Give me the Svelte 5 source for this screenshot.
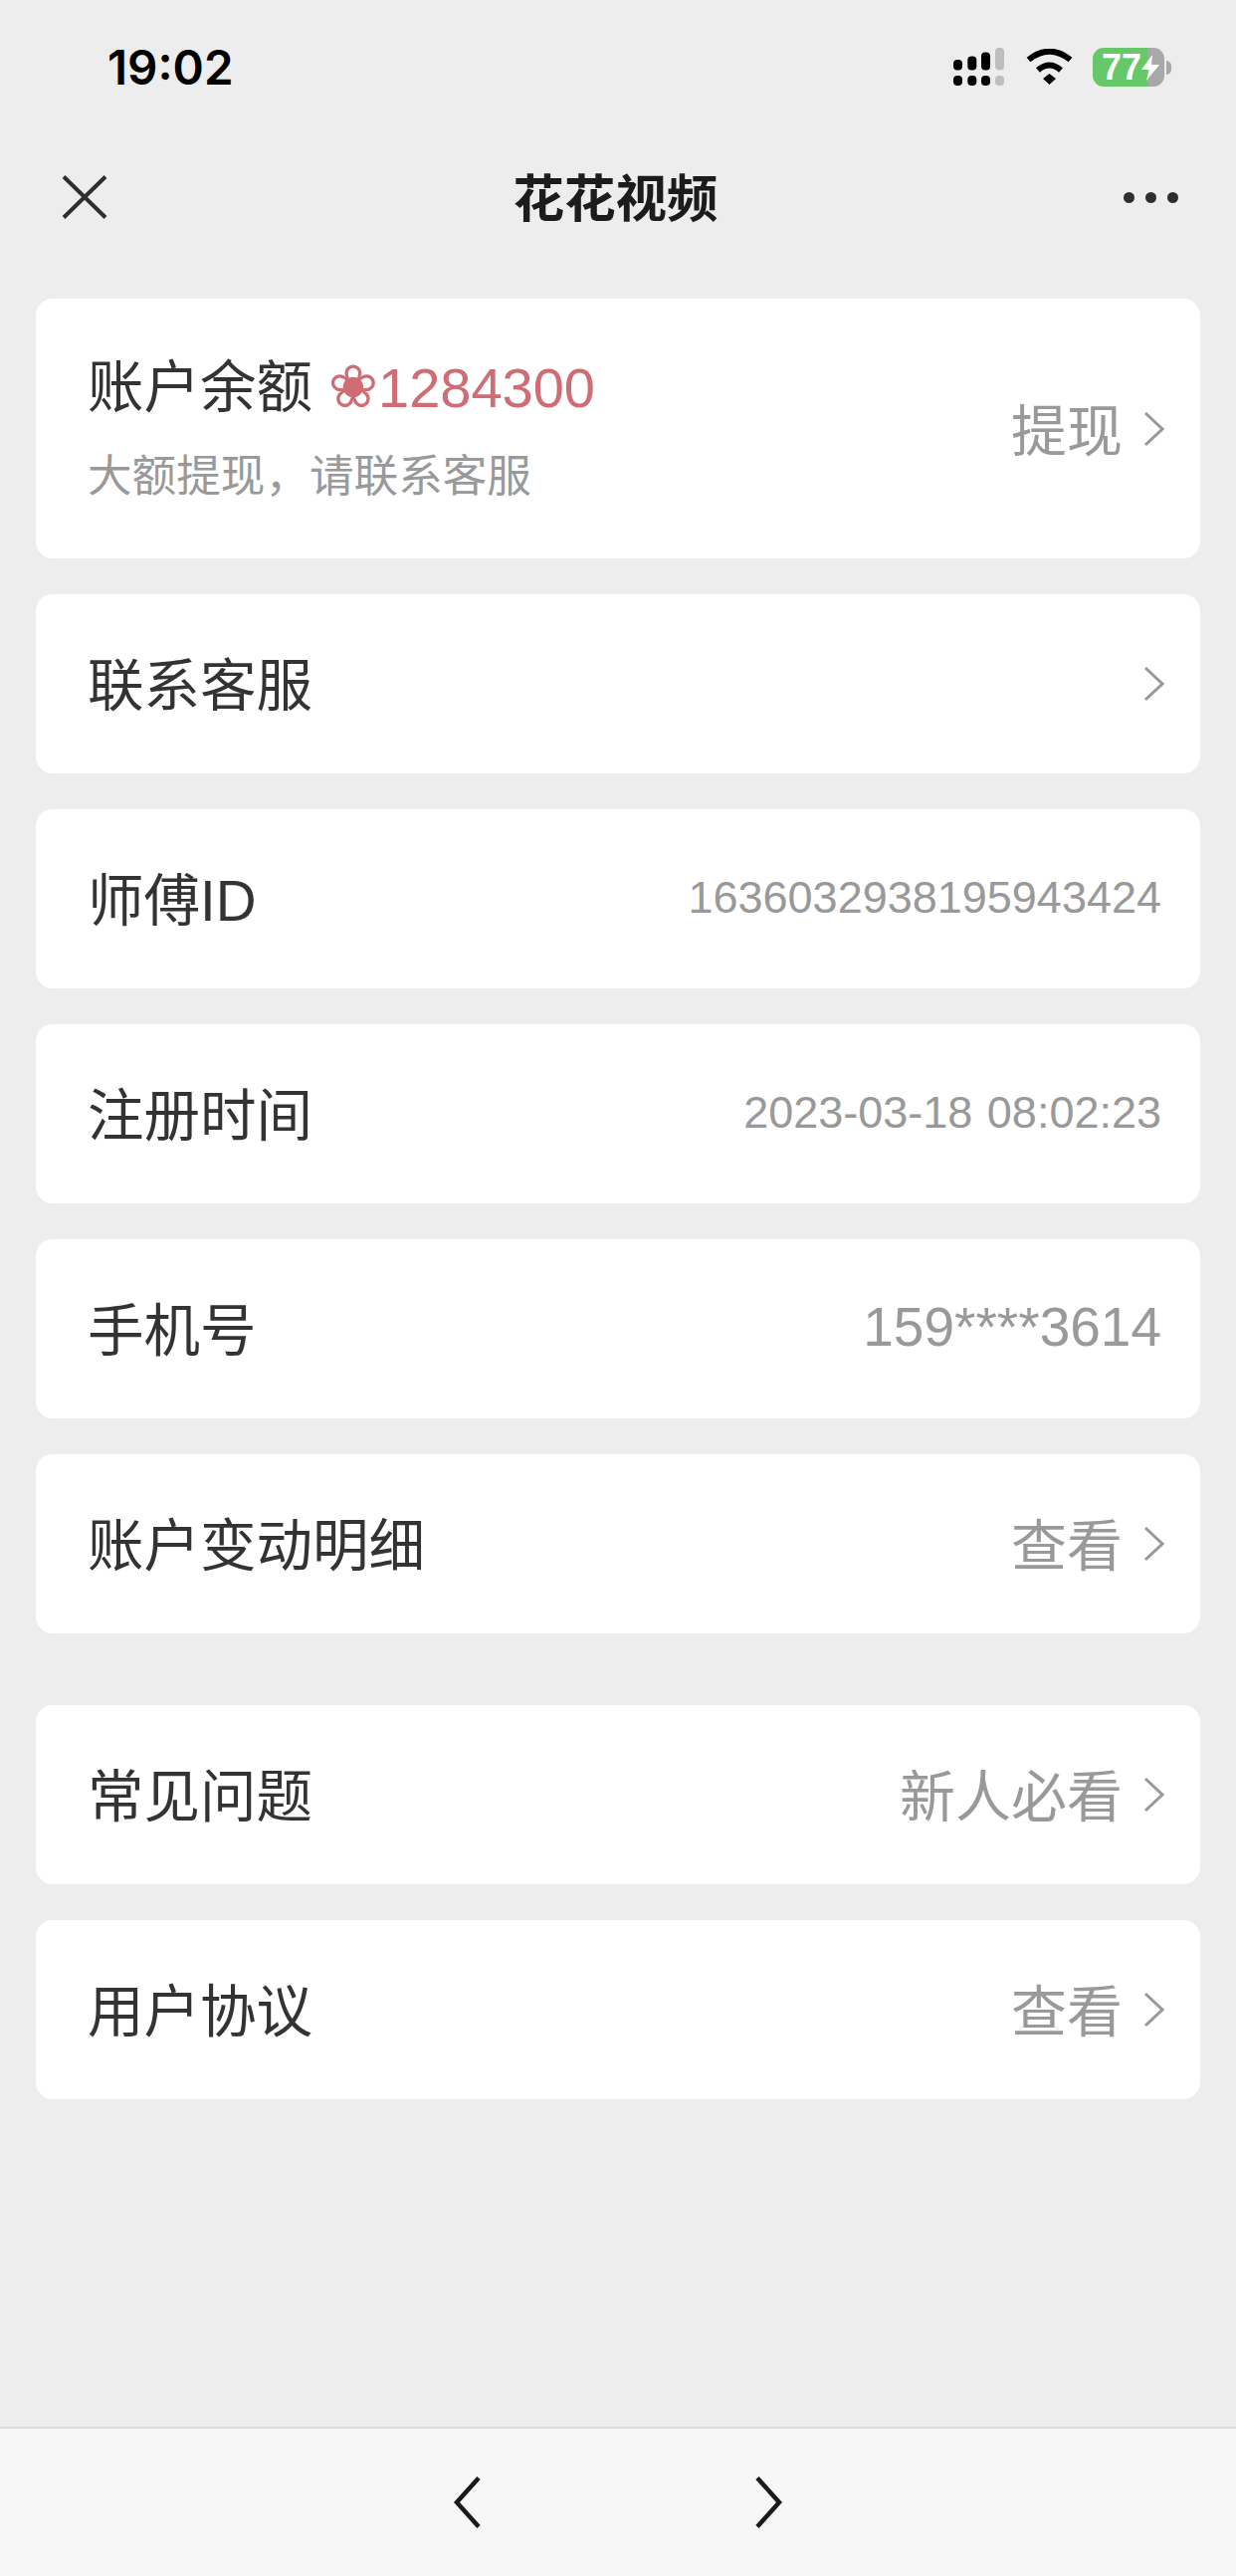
<script lang="ts">
  type Row = {
    label: string
    value?: string
    size?: 'small' | 'phone' | 'large'
    arrow?: boolean
    group?: boolean
  }

  const rows: Row[] = [
    { label: '联系客服', arrow: true },
    { label: '师傅ID', value: '1636032938195943424', size: 'small' },
    { label: '注册时间', value: '2023-03-18 08:02:23', size: 'small' },
    { label: '手机号', value: '159****3614', size: 'phone' },
    { label: '账户变动明细', value: '查看', size: 'large', arrow: true },
    { label: '常见问题', value: '新人必看', size: 'large', arrow: true, group: true },
    { label: '用户协议', value: '查看', size: 'large', arrow: true }
  ]

  const bars = [
    { x: 0, y: 12, h: 10.5 },
    { x: 14.3, y: 8.5, h: 14 },
    { x: 28, y: 4.5, h: 18 }
  ]
  const dots = [0, 14.3, 28]
</script>

<div class="page">
  <div class="status">
    <span class="time">19:02</span>
    <div class="status-icons">
      <svg class="signal" width="51" height="38" viewBox="0 0 51 38">
        {#each bars as b}
          <rect x={b.x} y={b.y} width="9" height={b.h} rx="4" fill="#000" />
        {/each}
        <rect x="42" y="0" width="9" height="22.5" rx="4" fill="#bdbdbd" />
        {#each dots as x}
          <rect {x} y="28" width="9" height="10" rx="4" fill="#000" />
        {/each}
        <rect x="42" y="28" width="9" height="10" rx="4" fill="#bdbdbd" />
      </svg>
      <svg class="wifi" width="47" height="36" viewBox="0 0 47 36">
        <path d="M2.5 11 Q23.5 -5.5 44.5 11" fill="none" stroke="#000" stroke-width="6" />
        <path d="M12 21.5 Q23.5 11.5 35 21.5" fill="none" stroke="#000" stroke-width="6" />
        <polygon points="17,30 23.5,25 30,30 23.5,36" fill="#000" />
      </svg>
      <div class="battery">
        <div class="battery-body">
          <span class="battery-level">77</span>
          <svg class="bolt" width="18" height="26" viewBox="0 0 18 26">
            <polygon points="11,0 0,15 7.5,15 5,26 18,10 10,10" fill="#fff" />
          </svg>
        </div>
        <span class="battery-nub"></span>
      </div>
    </div>
  </div>

  <header class="nav">
    <svg class="close" width="46" height="44" viewBox="0 0 46 44">
      <path d="M2 1.5 L44 42.5 M44 1.5 L2 42.5" stroke="#2e2e2e" stroke-width="4" fill="none" />
    </svg>
    <h1>花花视频</h1>
    <div class="more"><i></i><i></i><i></i></div>
  </header>

  <main class="list">
    <section class="card balance">
      <div class="balance-text">
        <div class="balance-line">账户余额 <span class="amount"><span class="flower">❀</span>1284300</span></div>
        <div class="hint">大额提现，请联系客服</div>
      </div>
      <div class="right">
        <span class="value large">提现</span>
        <svg class="chevron" width="21" height="36" viewBox="0 0 21 36">
          <path d="M2 2 L19 18 L2 34" fill="none" stroke="#999" stroke-width="3" />
        </svg>
      </div>
    </section>

    {#each rows as row}
      <section class="card row" class:group={row.group}>
        <span class="label">{row.label}</span>
        <div class="right">
          {#if row.value}
            <span class="value {row.size}">{row.value}</span>
          {/if}
          {#if row.arrow}
            <svg class="chevron" width="21" height="36" viewBox="0 0 21 36">
              <path d="M2 2 L19 18 L2 34" fill="none" stroke="#999" stroke-width="3" />
            </svg>
          {/if}
        </div>
      </section>
    {/each}
  </main>

  <footer class="toolbar">
    <svg width="30" height="52" viewBox="0 0 30 52">
      <path d="M27 1.5 L5 26 L27 50.5" fill="none" stroke="#1a1a1a" stroke-width="4.5" />
    </svg>
    <svg width="30" height="52" viewBox="0 0 30 52">
      <path d="M3 1.5 L25 26 L3 50.5" fill="none" stroke="#1a1a1a" stroke-width="4.5" />
    </svg>
  </footer>
</div>

<style>
  :global(body) {
    margin: 0;
    background: #ededed;
  }

  .page {
    display: flex;
    flex-direction: column;
    height: 2588px;
    background: #ededed;
    font-family: 'Liberation Sans', 'Noto Sans CJK SC', sans-serif;
    color: #333;
    overflow: hidden;
  }

  .status {
    display: flex;
    justify-content: space-between;
    align-items: flex-start;
    height: 132px;
    padding: 48px 65px 0 108px;
    box-sizing: border-box;
  }

  .time {
    font-family: Inter, 'Liberation Sans', sans-serif;
    font-size: 47.5px;
    font-weight: 600;
    line-height: 40px;
    color: #000;
  }

  .status-icons {
    display: flex;
    align-items: flex-start;
    gap: 20px;
  }

  .wifi {
    margin-left: 2px;
    margin-top: 1px;
  }

  .battery {
    display: flex;
    align-items: center;
    gap: 2px;
  }

  .battery-body {
    display: flex;
    align-items: center;
    width: 72px;
    height: 39px;
    padding-left: 9px;
    box-sizing: border-box;
    border-radius: 11px;
    background: linear-gradient(to right, #66c868 55px, #a8a8a8 55px);
  }

  .battery-level {
    font-family: 'Liberation Sans', sans-serif;
    font-size: 36px;
    font-weight: 700;
    line-height: 39px;
    color: #fff;
  }

  .battery-nub {
    width: 5px;
    height: 14px;
    border-radius: 0 7px 7px 0;
    background: #a8a8a8;
  }

  .nav {
    display: flex;
    align-items: center;
    justify-content: space-between;
    height: 132px;
    padding: 0 58px 0 62px;
    box-sizing: border-box;
  }

  .nav h1 {
    margin: 0 0 6px;
    font-family: 'Noto Sans CJK SC', sans-serif;
    font-size: 51.5px;
    font-weight: 700;
    color: #1c1c1c;
  }

  .more {
    display: flex;
    gap: 11px;
  }

  .more i {
    display: block;
    width: 11px;
    height: 11px;
    border-radius: 50%;
    background: #2e2e2e;
  }

  .list {
    flex: 1;
    display: flex;
    flex-direction: column;
    gap: 36px;
    padding: 36px 36px 0;
  }

  .card {
    display: flex;
    align-items: center;
    justify-content: space-between;
    background: #fff;
    border-radius: 17px;
    padding: 0 36px 0 52px;
    box-sizing: border-box;
  }

  .row {
    height: 180px;
  }

  .row.group {
    margin-top: 36px;
  }

  .balance {
    height: 261px;
  }

  .balance-line {
    font-size: 56.5px;
    line-height: 72px;
    white-space: nowrap;
  }

  .amount {
    font-size: 56px;
    color: #cf6c74;
  }

  .flower {
    font-family: 'DejaVu Sans', sans-serif;
    font-size: 60px;
    line-height: 1;
  }

  .hint {
    margin-top: 25px;
    font-size: 44.6px;
    line-height: 56px;
    color: #999;
  }

  .label {
    margin-bottom: 6px;
    font-size: 56.5px;
    color: #333;
  }

  .right {
    display: flex;
    align-items: center;
    gap: 21px;
  }

  .value {
    color: #999;
    white-space: nowrap;
  }

  .value:last-child {
    margin-right: 3px;
  }

  .value.small {
    margin-bottom: 2px;
    font-size: 45px;
    word-spacing: 2px;
  }

  .value.phone {
    margin-bottom: 5px;
    font-size: 55px;
  }

  .value.large {
    margin-bottom: 5px;
    font-size: 56px;
  }

  .toolbar {
    display: flex;
    justify-content: center;
    align-items: center;
    gap: 274px;
    height: 150px;
    box-sizing: border-box;
    background: #f7f7f7;
    border-top: 2px solid #dcdcdc;
  }
</style>
